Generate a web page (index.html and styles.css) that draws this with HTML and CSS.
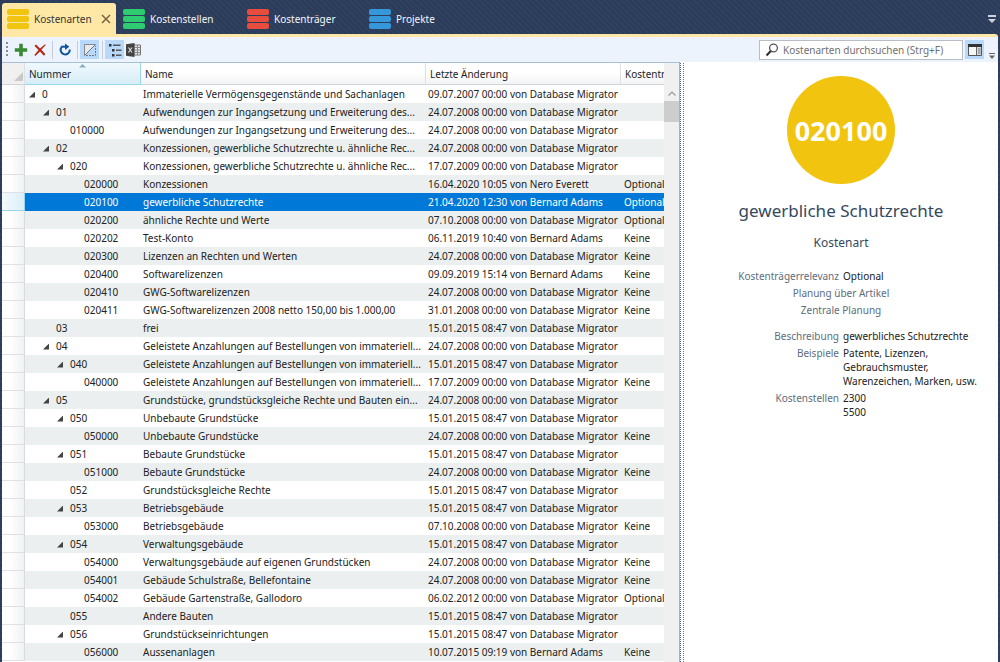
FILE: index.html
```html
<!DOCTYPE html>
<html lang="de">
<head>
<meta charset="utf-8">
<meta name="viewport" content="width=device-width, initial-scale=1">
<title>Kostenarten</title>
<link rel="stylesheet" href="styles.css">
</head>
<body>
<nav class="tabs">
  <div class="tab active">
    <button class="tab-link" type="button"><span class="stack yellow"><i></i><i></i><i></i></span>Kostenarten</button>
    <button class="tab-close" type="button" aria-label="Schließen"><svg width="10" height="10" viewBox="0 0 10 10"><path d="M1 1l8 8M9 1L1 9" stroke="#6d5f3c" stroke-width="1.4" fill="none"/></svg></button>
  </div>
  <div class="tab second"><button class="tab-link" type="button"><span class="stack green"><i></i><i></i><i></i></span>Kostenstellen</button></div>
  <div class="tab third"><button class="tab-link" type="button"><span class="stack red"><i></i><i></i><i></i></span>Kostenträger</button></div>
  <div class="tab"><button class="tab-link" type="button"><span class="stack blue"><i></i><i></i><i></i></span>Projekte</button></div>
  <button class="tab-menu" type="button" aria-label="Weitere Tabs"><svg width="8" height="8" viewBox="0 0 8 8"><path d="M0 0h8v2H0zM0 4h8L4 8z" fill="#ced4de"/></svg></button>
</nav>
<main class="window">
  <div class="toolbar">
    <span class="grip"></span>
    <button class="tool" type="button" aria-label="Neu"><svg width="14" height="14" viewBox="0 0 14 14"><path d="M5.200 .8h3.600v4.400h4.400v3.600H8.800v4.400H5.200V8.800H.8V5.200h4.400z" fill="#388a34"/></svg></button>
    <button class="tool" type="button" aria-label="Löschen"><svg width="14" height="14" viewBox="0 0 14 14"><path d="M1.500 2.800L3 1.500 7 5.400 12 1.200l.7.700L8.400 6.800l4 4.400-1.500 1.500L7 8.400l-4.600 4.500-1-1L5.500 7z" fill="#b5260f"/></svg></button>
    <span class="sep"></span>
    <button class="tool" type="button" aria-label="Aktualisieren"><svg width="14" height="14" viewBox="0 0 14 14"><path d="M3.700 3.800A4.600 4.600 0 1 0 11.800 6.500" fill="none" stroke="#0b539c" stroke-width="2"/><path d="M3.200 3.700h4.300" stroke="#0b539c" stroke-width="2"/><path d="M7 .6l4.300 3.100L7 6.900z" fill="#0b539c"/></svg></button>
    <span class="sep"></span>
    <button class="tool on" type="button" aria-label="Inaktive ausblenden"><svg width="14" height="14" viewBox="0 0 14 14"><path d="M2 2h10L2 12z" fill="#e6eaee"/><path d="M1.500 12.500v-11h11" fill="none" stroke="#858a90"/><path d="M3 12.500h9.500V3" fill="none" stroke="#777" stroke-dasharray="2 1"/><path d="M1.500 12.500l11-11" stroke="#777"/></svg></button>
    <span class="sep"></span>
    <button class="tool on" type="button" aria-label="Baumansicht"><svg width="14" height="14" viewBox="0 0 14 14"><path d="M1 1h2.500v2.500H1zM4 6h2.500v2.500H4zM4 11h2.500v2.500H4z" fill="#333"/><path d="M5 2.300h7.500M8 7.300h5.500M8 12.300h5.500" stroke="#555" stroke-width="1.400"/></svg></button>
    <button class="tool" type="button" aria-label="Excel-Export"><svg width="15" height="14" viewBox="0 0 15 14"><path d="M8 2h6.500v10H8z" fill="#e8eaec" stroke="#777"/><path d="M9 4.500h5M9 7h5M9 9.500h5M11.500 2v10" stroke="#888"/><path d="M0 1.300L8.500 0v14L0 12.700z" fill="#444"/><path d="M2.500 4.500l3.500 5M6 4.500l-3.500 5" stroke="#ddd" stroke-width="1.200"/></svg></button>
    <span class="spacer"></span>
    <label class="search"><svg width="14" height="14" viewBox="0 0 14 14"><circle cx="8.500" cy="5" r="3.900" fill="#fff" stroke="#555" stroke-width="1.300"/><path d="M5.800 8L1.500 12.500" stroke="#333" stroke-width="2.200"/></svg><input type="text" aria-label="Suche" placeholder="Kostenarten durchsuchen (Strg+F)"></label>
    <button class="tool on detail-toggle" type="button" aria-label="Detailbereich"><svg width="14" height="12" viewBox="0 0 14 12"><path d="M.5 .5h13v11H.5z" fill="#f4f6f8" stroke="#555"/><path d="M0 0h14v3H0z" fill="#333"/><path d="M8.500 3v8" stroke="#666"/><path d="M9 3h4v8H9z" fill="#d5d8dc"/><path d="M10 5h2.500M10 7h2.500M10 9h2.500" stroke="#777"/></svg></button>
    <button class="overflow" type="button" aria-label="Weitere Befehle"><svg width="6" height="6" viewBox="0 0 6 6"><path d="M0 0h6v1H0zM0 2.500h6L3 6z" fill="#666"/></svg></button>
  </div>
  <div class="content">
    <div class="grid">
      <table>
        <colgroup><col class="c-head"><col class="c-num"><col class="c-name"><col class="c-date"><col></colgroup>
        <thead><tr><th class="corner"><svg width="9" height="9" viewBox="0 0 9 9"><path d="M9 0v9H0z" fill="#c9c9c9"/></svg></th><th class="sorted"><svg class="sort" width="7" height="4" viewBox="0 0 7 4"><path d="M3.500 0L7 3.500H0z" fill="#86aec2"/></svg>Nummer</th><th>Name</th><th>Letzte Änderung</th><th>Kostenträgerrelevanz</th></tr></thead>
        <tbody>
<tr><td></td><td class="l0"><button class="twist" type="button" aria-label="Zuklappen"></button>0</td><td>Immaterielle Vermögensgegenstände und Sachanlagen</td><td>09.07.2007 00:00 von Database Migrator</td><td></td></tr>
<tr><td></td><td class="l1"><button class="twist" type="button" aria-label="Zuklappen"></button>01</td><td>Aufwendungen zur Ingangsetzung und Erweiterung des...</td><td>24.07.2008 00:00 von Database Migrator</td><td></td></tr>
<tr><td></td><td class="l2 leaf">010000</td><td>Aufwendungen zur Ingangsetzung und Erweiterung des...</td><td>24.07.2008 00:00 von Database Migrator</td><td></td></tr>
<tr><td></td><td class="l1"><button class="twist" type="button" aria-label="Zuklappen"></button>02</td><td>Konzessionen, gewerbliche Schutzrechte u. ähnliche Rec...</td><td>24.07.2008 00:00 von Database Migrator</td><td></td></tr>
<tr><td></td><td class="l2"><button class="twist" type="button" aria-label="Zuklappen"></button>020</td><td>Konzessionen, gewerbliche Schutzrechte u. ähnliche Rec...</td><td>17.07.2009 00:00 von Database Migrator</td><td></td></tr>
<tr><td></td><td class="l3 leaf">020000</td><td>Konzessionen</td><td>16.04.2020 10:05 von Nero Everett</td><td>Optional</td></tr>
<tr class="selected"><td></td><td class="l3 leaf">020100</td><td>gewerbliche Schutzrechte</td><td>21.04.2020 12:30 von Bernard Adams</td><td>Optional</td></tr>
<tr><td></td><td class="l3 leaf">020200</td><td>ähnliche Rechte und Werte</td><td>07.10.2008 00:00 von Database Migrator</td><td>Optional</td></tr>
<tr><td></td><td class="l3 leaf">020202</td><td>Test-Konto</td><td>06.11.2019 10:40 von Bernard Adams</td><td>Keine</td></tr>
<tr><td></td><td class="l3 leaf">020300</td><td>Lizenzen an Rechten und Werten</td><td>24.07.2008 00:00 von Database Migrator</td><td>Keine</td></tr>
<tr><td></td><td class="l3 leaf">020400</td><td>Softwarelizenzen</td><td>09.09.2019 15:14 von Bernard Adams</td><td>Keine</td></tr>
<tr><td></td><td class="l3 leaf">020410</td><td>GWG-Softwarelizenzen</td><td>24.07.2008 00:00 von Database Migrator</td><td>Keine</td></tr>
<tr><td></td><td class="l3 leaf">020411</td><td>GWG-Softwarelizenzen 2008 netto 150,00 bis 1.000,00</td><td>31.01.2008 00:00 von Database Migrator</td><td>Keine</td></tr>
<tr><td></td><td class="l1 leaf">03</td><td>frei</td><td>15.01.2015 08:47 von Database Migrator</td><td></td></tr>
<tr><td></td><td class="l1"><button class="twist" type="button" aria-label="Zuklappen"></button>04</td><td>Geleistete Anzahlungen auf Bestellungen von immateriell...</td><td>24.07.2008 00:00 von Database Migrator</td><td></td></tr>
<tr><td></td><td class="l2"><button class="twist" type="button" aria-label="Zuklappen"></button>040</td><td>Geleistete Anzahlungen auf Bestellungen von immateriell...</td><td>15.01.2015 08:47 von Database Migrator</td><td></td></tr>
<tr><td></td><td class="l3 leaf">040000</td><td>Geleistete Anzahlungen auf Bestellungen von immateriell...</td><td>17.07.2009 00:00 von Database Migrator</td><td>Keine</td></tr>
<tr><td></td><td class="l1"><button class="twist" type="button" aria-label="Zuklappen"></button>05</td><td>Grundstücke, grundstücksgleiche Rechte und Bauten ein...</td><td>24.07.2008 00:00 von Database Migrator</td><td></td></tr>
<tr><td></td><td class="l2"><button class="twist" type="button" aria-label="Zuklappen"></button>050</td><td>Unbebaute Grundstücke</td><td>15.01.2015 08:47 von Database Migrator</td><td></td></tr>
<tr><td></td><td class="l3 leaf">050000</td><td>Unbebaute Grundstücke</td><td>24.07.2008 00:00 von Database Migrator</td><td>Keine</td></tr>
<tr><td></td><td class="l2"><button class="twist" type="button" aria-label="Zuklappen"></button>051</td><td>Bebaute Grundstücke</td><td>15.01.2015 08:47 von Database Migrator</td><td></td></tr>
<tr><td></td><td class="l3 leaf">051000</td><td>Bebaute Grundstücke</td><td>24.07.2008 00:00 von Database Migrator</td><td>Keine</td></tr>
<tr><td></td><td class="l2 leaf">052</td><td>Grundstücksgleiche Rechte</td><td>15.01.2015 08:47 von Database Migrator</td><td></td></tr>
<tr><td></td><td class="l2"><button class="twist" type="button" aria-label="Zuklappen"></button>053</td><td>Betriebsgebäude</td><td>15.01.2015 08:47 von Database Migrator</td><td></td></tr>
<tr><td></td><td class="l3 leaf">053000</td><td>Betriebsgebäude</td><td>07.10.2008 00:00 von Database Migrator</td><td>Keine</td></tr>
<tr><td></td><td class="l2"><button class="twist" type="button" aria-label="Zuklappen"></button>054</td><td>Verwaltungsgebäude</td><td>15.01.2015 08:47 von Database Migrator</td><td></td></tr>
<tr><td></td><td class="l3 leaf">054000</td><td>Verwaltungsgebäude auf eigenen Grundstücken</td><td>24.07.2008 00:00 von Database Migrator</td><td>Keine</td></tr>
<tr><td></td><td class="l3 leaf">054001</td><td>Gebäude Schulstraße, Bellefontaine</td><td>24.07.2008 00:00 von Database Migrator</td><td>Keine</td></tr>
<tr><td></td><td class="l3 leaf">054002</td><td>Gebäude Gartenstraße, Gallodoro</td><td>06.02.2012 00:00 von Database Migrator</td><td>Optional</td></tr>
<tr><td></td><td class="l2 leaf">055</td><td>Andere Bauten</td><td>15.01.2015 08:47 von Database Migrator</td><td></td></tr>
<tr><td></td><td class="l2"><button class="twist" type="button" aria-label="Zuklappen"></button>056</td><td>Grundstückseinrichtungen</td><td>15.01.2015 08:47 von Database Migrator</td><td></td></tr>
<tr><td></td><td class="l3 leaf">056000</td><td>Aussenanlagen</td><td>10.07.2015 09:19 von Bernard Adams</td><td>Keine</td></tr>
        </tbody>
      </table>
    </div>
    <div class="scrollbar"><svg width="8" height="5" viewBox="0 0 8 5"><path d="M.5 4.500L4 1l3.500 3.500" fill="none" stroke="#9a9a9a" stroke-width="1.200"/></svg><span class="thumb"></span></div>
    <div class="splitter"></div>
    <aside class="detail">
      <div class="badge">020100</div>
      <h1>gewerbliche Schutzrechte</h1>
      <h2>Kostenart</h2>
      <dl class="facts">
        <dt>Kostenträgerrelevanz</dt><dd>Optional</dd>
        <dt class="wide">Planung über Artikel</dt>
        <dt class="wide">Zentrale Planung</dt>
      </dl>
      <dl class="facts">
        <dt>Beschreibung</dt><dd>gewerbliches Schutzrechte</dd>
        <dt>Beispiele</dt><dd>Patente, Lizenzen,<br>Gebrauchsmuster,<br>Warenzeichen, Marken, usw.</dd>
        <dt>Kostenstellen</dt><dd>2300<br>5500</dd>
      </dl>
    </aside>
  </div>
</main>
</body>
</html>
```
FILE: styles.css
```css
* { box-sizing: border-box; }
body {
  margin: 0;
  height: 100vh;
  overflow: hidden;
  display: flex;
  flex-direction: column;
  padding: 0 2px;
  font-family: "Noto Sans", "Open Sans", sans-serif;
  font-size: 10px;
  color: #222;
  background: repeating-linear-gradient(45deg, #2b3c5a 0 2px, #304160 2px 4px);
}
button { border: 0; padding: 0; background: none; font: inherit; color: inherit; }
svg { display: block; flex: none; }

.tabs { display: flex; height: 34px; padding-top: 3px; flex: none; }
.tab { display: flex; align-items: center; padding-left: 7px; border-radius: 3px 3px 0 0; color: #f3f5f8; }
.tab.active { width: 114px; padding: 0 4px 0 5px; justify-content: space-between; background: #ffe8a6; color: #333; }
.tab.second { width: 124px; }
.tab.third { width: 122px; }
.tab-link { display: flex; align-items: center; gap: 5px; }
.tab-close { width: 11px; }
.stack { display: grid; gap: 1px; width: 22px; }
.stack i { height: 6px; border-radius: 2px; }
.yellow i { background: #f1c40f; }
.green i { background: #2ecc71; }
.red i { background: #e74c3c; }
.blue i { background: #3498db; }
.tab-menu { margin-left: auto; padding-right: 2px; }

.window {
  flex: 1;
  min-height: 0;
  display: flex;
  flex-direction: column;
  border-top: 3px solid #ffe8a6;
  border-top-right-radius: 3px;
  background: #fff;
}
.toolbar { display: flex; align-items: center; height: 25px; flex: none; padding-left: 4px; background: #ecf3fd; }
.grip { width: 2px; height: 16px; margin-right: 3px; background: repeating-linear-gradient(#8a8f96 0 2px, transparent 2px 4px); }
.tool { display: flex; align-items: center; justify-content: center; width: 19px; height: 19px; }
.tool.on { background: #b9d9fb; }
.sep { width: 1px; height: 18px; margin: 0 2px 0 3px; background: #c3ccd8; }
.spacer { flex: 1; }
.search { display: flex; align-items: center; gap: 4px; width: 204px; height: 20px; padding-left: 5px; background: #fff; border: 1px solid #b8bcc4; }
.search input { flex: 1; min-width: 0; padding: 0; border: 0; outline: 0; font: inherit; background: none; }
.search input::placeholder { color: #6f6f6f; opacity: 1; }
.detail-toggle { margin: 0 5px 0 2px; }
.overflow { align-self: flex-end; padding: 0 3px 3px 0; }

.content { flex: 1; min-height: 0; display: flex; }
.grid { flex: 1; min-width: 0; overflow: hidden; border-top: 1px solid #a9bfd3; }
table { width: 100%; table-layout: fixed; border-collapse: separate; border-spacing: 0; }
.c-head { width: 23px; }
.c-num { width: 116px; }
.c-name { width: 285px; }
.c-date { width: 195px; }
th, td { overflow: hidden; white-space: nowrap; text-align: left; }
th { position: relative; height: 22px; padding: 0 0 0 4px; font-weight: 400; color: #1e1e1e; background: linear-gradient(#fff 0 45%, #f2f3f5); border-right: 1px solid #dcdfe3; border-bottom: 1px solid #d2d5d9; }
th:last-child { border-right: 0; }
.corner { padding: 5px 1px 0 12px; background: #f0f0f0; }
.sorted { background: linear-gradient(#f0f9fe, #d8edf7); border-color: #9bd6ef; }
.sort { position: absolute; top: 1px; left: 54px; }
td { height: 18px; padding: 0 0 0 2px; line-height: 17px; }
td:last-child { padding-left: 3px; }
tbody tr:nth-child(even) td { background: #ebefef; }
tbody tr td:first-child { background: linear-gradient(90deg, #fff, #fff 35%, #eff1f3); border-right: 1px solid #d8dade; border-bottom: 1px solid #dfe1e4; }
tbody .selected td { background: #0078d7; color: #fff; }
tbody .selected td:first-child { background: linear-gradient(90deg, #f2fafe, #dceff8); border-color: #9bd6ef; }
.l0 { padding-left: 4px; }
.l1 { padding-left: 18px; }
.l2 { padding-left: 32px; }
.l3 { padding-left: 46px; }
.twist { width: 6px; height: 6px; margin-right: 7px; background: #444; clip-path: polygon(100% 0, 100% 100%, 0 100%); }
.leaf::before { content: ""; display: inline-block; width: 13px; }

.scrollbar { width: 15px; padding-top: 28px; display: flex; flex-direction: column; align-items: center; gap: 5px; background: #f0f0f0; border-top: 1px solid #a9bfd3; }
.thumb { width: 15px; height: 21px; background: #cdcdcd; }
.splitter { width: 6px; border-left: 1px solid #9db4cb; background: repeating-linear-gradient(#fff 0 1px, transparent 1px 2px), linear-gradient(90deg, #4a648c 0 1px, #fff 1px 3px, #777 3px 4px, #fff 4px); }

.detail { width: 313px; padding: 14px 9px 0 8px; text-align: center; }
.badge { width: 108px; height: 108px; margin: 0 auto; border-radius: 50%; background: #f1c40f; color: #fff; font-size: 27px; font-weight: 700; line-height: 110px; }
h1, h2 { margin: 0; font-weight: 400; color: #34495e; }
h1 { margin-top: 15px; font-size: 17px; line-height: 24px; }
h2 { margin-top: 11px; font-size: 12px; line-height: 18px; }
.facts { display: grid; grid-template-columns: 1fr 1fr; gap: 3px 4px; margin: 17px 0 0; line-height: 14px; }
.facts + .facts { margin-top: 12px; }
dt { text-align: right; color: #5d6d7e; }
dt.wide { grid-column: 1 / -1; text-align: center; }
dd { margin: 0; text-align: left; white-space: nowrap; }
```
